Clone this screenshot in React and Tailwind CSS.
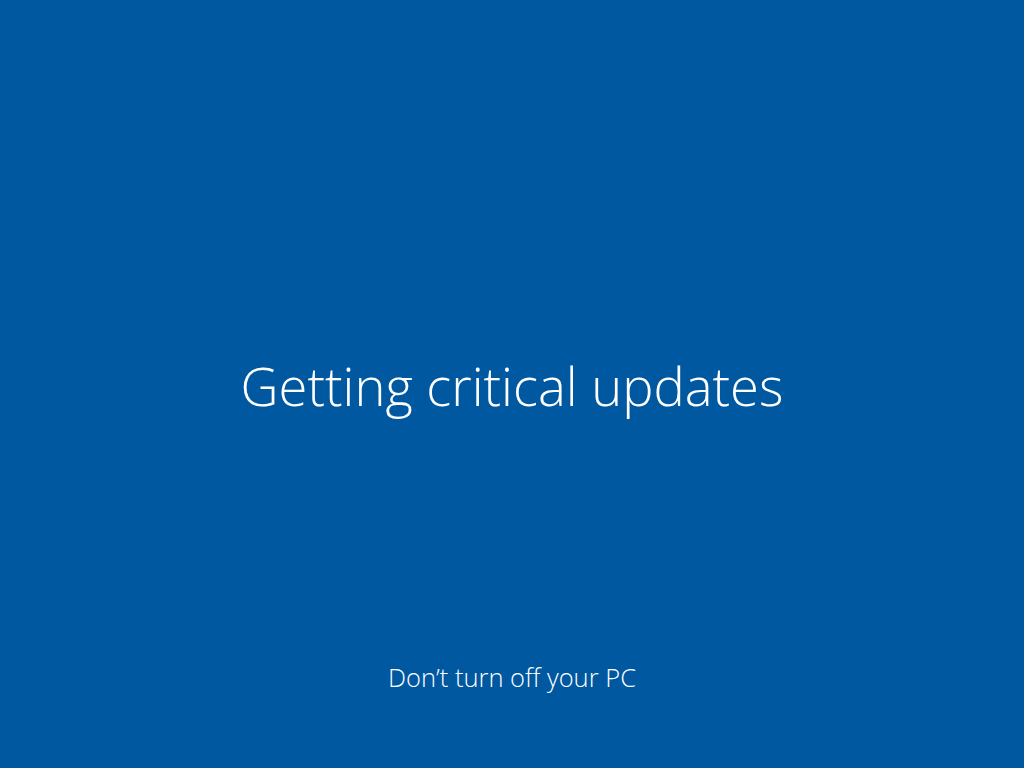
import React from 'react';

const App = () => {
  return (
    <div
      className="w-full h-[768px] bg-[#0058a0] text-white flex flex-col items-center"
      style={{ fontFamily: '"Open Sans", "Noto Sans", sans-serif' }}
    >
      <div className="flex-1 flex items-center justify-center pt-[108px]">
        <h1 className="text-[52.5px] font-light leading-none">Getting critical updates</h1>
      </div>
      <p className="text-[25.5px] font-light leading-none pb-[78px]">Don’t turn off your PC</p>
    </div>
  );
};

export default App;
